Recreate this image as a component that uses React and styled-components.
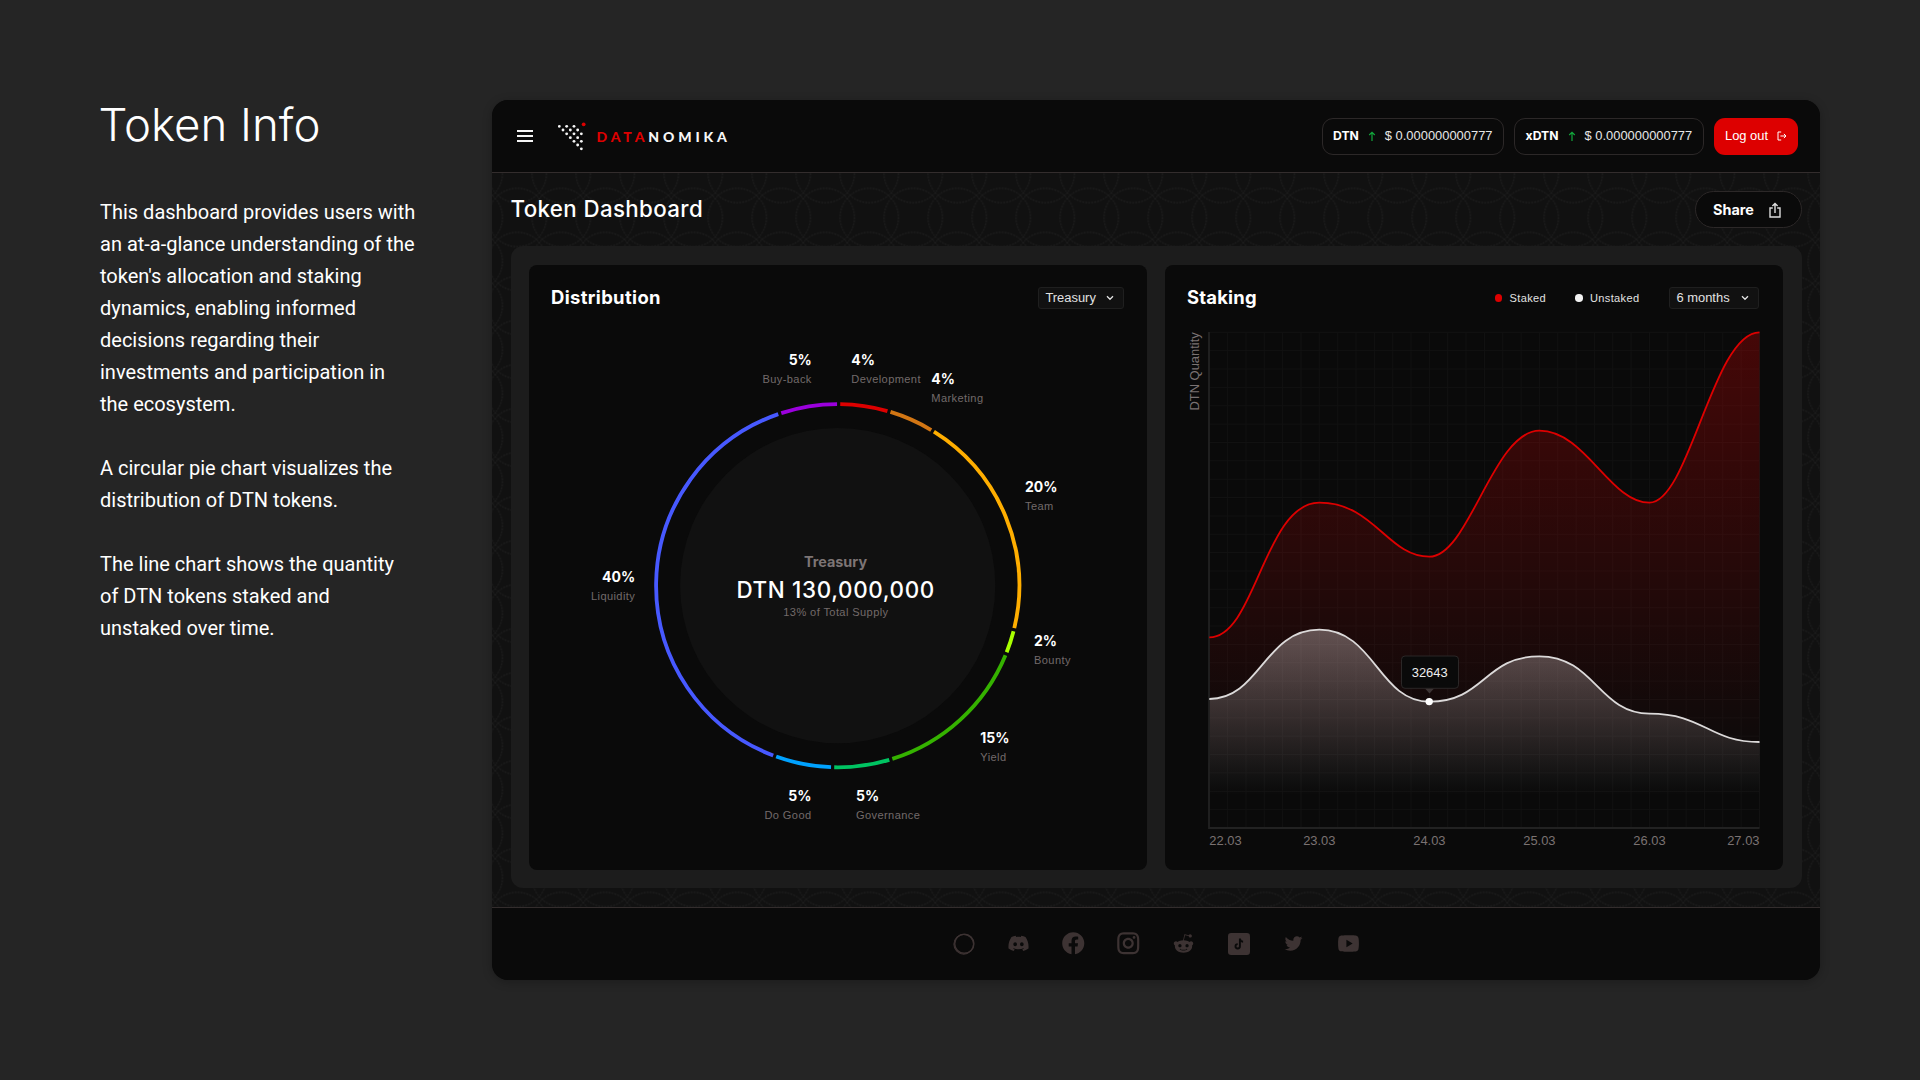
import React from "react";
import styled, { createGlobalStyle } from "styled-components";
import {
  RiFacebookCircleFill,
  RiInstagramLine,
  RiTwitterFill,
  RiYoutubeFill,
  RiDiscordFill,
} from "react-icons/ri";
import { FaRedditAlien } from "react-icons/fa";

const display = `Inter, "Liberation Sans", sans-serif`;
const text = `"Liberation Sans", Arial, sans-serif`;

const GlobalStyle = createGlobalStyle`
  *, *::before, *::after { box-sizing: border-box; }
  body { margin: 0; background: #252525; }
`;

const Page = styled.div`
  display: flex;
  width: 1920px;
  height: 1080px;
  padding: 100px;
  overflow: hidden;
  background: #252525;
  color: #fff;
`;

const Intro = styled.aside`
  flex: none;
  width: 392px;
`;

const IntroTitle = styled.h1`
  margin: 0 0 47px -1.5px;
  font: 300 45.6px/49px ${display};
`;

const IntroText = styled.p`
  margin: 0 0 32px;
  font: 400 20px/32px Roboto, sans-serif;
  letter-spacing: 0;
  white-space: pre-line;
`;

const Window = styled.div`
  display: flex;
  flex-direction: column;
  flex: none;
  width: 1328px;
  height: 880px;
  border-radius: 16px;
  overflow: hidden;
  background: #111;
  box-shadow: 0 2px 10px rgba(0, 0, 0, 0.25);
`;

const Header = styled.header`
  display: flex;
  align-items: center;
  height: 73px;
  padding: 0 22px 0 24.7px;
  border-bottom: 1px solid #332d2d;
  background: #0a0a0a;
`;

const Burger = styled.div`
  display: flex;
  flex-direction: column;
  gap: 3.2px;
  width: 16.6px;
  margin-right: 24.7px;
`;

const BurgerLine = styled.span`
  height: 1.7px;
  background: #f5f5f5;
`;

const Wordmark = styled.div`
  margin: 1px auto 0 10.5px;
  color: #f7f7f7;
  font: 900 14px/20px Lato, sans-serif;
  letter-spacing: 3.85px;
`;

const WordmarkAccent = styled.span`
  color: #dd0000;
`;

const Actions = styled.div`
  display: flex;
  gap: 10.5px;
`;

const Price = styled.div`
  display: flex;
  align-items: center;
  height: 37px;
  padding: 0 10.3px;
  border: 1px solid #2c2828;
  border-radius: 11px;
  color: #e6e6e6;
  font: 400 12.91px/16px ${text};
`;

const Symbol = styled.b`
  color: #fff;
  font: 700 12.2px/16px ${display};
`;

const LogoutButton = styled.button`
  display: flex;
  align-items: center;
  justify-content: space-between;
  width: 84px;
  height: 37px;
  padding: 0 11px;
  border: 0;
  border-radius: 11px;
  background: #dd0000;
  color: #fff;
  font: 400 12.91px/16px ${text};
`;

const Main = styled.main`
  position: relative;
  display: flex;
  flex-direction: column;
  gap: 18px;
  height: 734px;
  padding: 18px 18.5px 19px;
  background: #111;
`;

const Pattern = styled.svg`
  position: absolute;
  inset: 0;
  width: 100%;
  height: 100%;
`;

const TitleRow = styled.div`
  position: relative;
  display: flex;
  align-items: center;
  justify-content: space-between;
  height: 37px;
`;

const PageTitle = styled.h2`
  margin: -2px 0 0;
  font: 500 22.3px/30px ${display};
  letter-spacing: 0.37px;
`;

const ShareButton = styled.button`
  display: flex;
  align-items: center;
  justify-content: space-between;
  width: 107px;
  height: 37px;
  padding: 0 19.5px 0 17.5px;
  border: 1px solid #2c2828;
  border-radius: 19px;
  background: #0a0a0a;
  color: #fff;
  font: 700 14.4px/18px ${display};
`;

const Panel = styled.section`
  position: relative;
  display: flex;
  flex: 1;
  gap: 18px;
  padding: 19px 18.5px 18px;
  border-radius: 12px;
  background: #1c1c1c;
`;

const Card = styled.article`
  flex: 1;
  border-radius: 8px;
  overflow: hidden;
  background: #0a0a0a;
`;

const CardHeader = styled.div`
  display: flex;
  align-items: center;
  height: 44px;
  padding: 22px ${(p) => p.$right}px 0 22px;
`;

const CardTitle = styled.h3`
  margin: -3px auto 0 0;
  font: 700 18.44px/22px ${display};
  letter-spacing: ${(p) => p.$tracking || 0}px;
`;

const Select = styled.div`
  display: flex;
  align-items: center;
  justify-content: space-between;
  width: ${(p) => p.$width}px;
  height: 22px;
  padding: 0 9px 0 6.5px;
  border: 1px solid #1f1f1f;
  border-radius: 3px;
  background: #111;
  color: #e2e2e2;
  font: 400 12.91px/16px ${text};
`;

const LegendItem = styled.div`
  display: flex;
  align-items: center;
  gap: 7.4px;
  margin-right: ${(p) => p.$gap}px;
  color: #e2e2e2;
  font: 400 11.07px/14px ${text};
  letter-spacing: 0.35px;
`;

const LegendDot = styled.span`
  width: 7.5px;
  height: 7.5px;
  border-radius: 50%;
  background: ${(p) => p.$color};
`;

const Chart = styled.svg`
  display: block;
  width: 618px;
  height: 561px;
`;

const Percent = styled.text`
  fill: #fff;
  font: 700 14px ${display};
  text-anchor: ${(p) => p.$anchor};
`;

const Caption = styled.text`
  fill: #736a6a;
  font: 400 11.07px ${text};
  letter-spacing: 0.4px;
  text-anchor: ${(p) => p.$anchor};
`;

const CenterName = styled.text`
  fill: #7d7575;
  font: 700 14.4px ${display};
  text-anchor: middle;
`;

const CenterValue = styled.text`
  fill: #fff;
  font: 500 22.4px ${display};
  letter-spacing: 0.65px;
  text-anchor: middle;
`;

const AxisText = styled.text`
  fill: #7a7272;
  font: 400 12.91px ${text};
  text-anchor: ${(p) => p.$anchor || "middle"};
`;

const TooltipText = styled.text`
  fill: #eee;
  font: 400 12.91px ${text};
  text-anchor: middle;
`;

const Footer = styled.footer`
  display: flex;
  align-items: center;
  justify-content: center;
  gap: 28px;
  height: 73px;
  padding-bottom: 1px;
  border-top: 1px solid #332d2d;
  background: #0a0a0a;
`;

const Social = styled.a`
  display: grid;
  place-items: center;
  width: 27px;
  height: 27px;
  color: #3d3333;
`;

const logoDots = [
  [178, 49], [200, 49], [222, 49], [189, 60], [211, 60], [233, 60],
  [200, 71.5], [222, 71.5], [244, 71.5], [211, 83], [233, 83],
  [222, 94], [244, 94], [233, 105], [244, 116.5],
];

function LogoMark() {
  return (
    <svg width="28" height="30" viewBox="174 33 84 90">
      {logoDots.map(([x, y]) => (
        <circle key={`${x}-${y}`} cx={x} cy={y} r="4.3" fill="#f5f5f5" />
      ))}
      <circle cx="251" cy="43" r="5.6" fill="#dd0000" />
    </svg>
  );
}

const UpArrow = styled.svg`
  width: 8px;
  height: 11px;
  margin: 0 9px;
`;

function PriceTag({ symbol }) {
  return (
    <Price>
      <Symbol>{symbol}</Symbol>
      <UpArrow viewBox="0 0 8 11">
        <path d="M4 10V1.5M1.2 4L4 1.3L6.8 4" fill="none" stroke="#12a83c" strokeWidth="1.2" />
      </UpArrow>
      $ 0.000000000777
    </Price>
  );
}

function Chevron() {
  return (
    <svg width="8" height="6" viewBox="0 0 8 6">
      <path d="M1 1.2L4 4.3L7 1.2" fill="none" stroke="#e2e2e2" strokeWidth="1.3" />
    </svg>
  );
}

const slices = [
  { from: 0.3, to: 16.4, color: "#dd0000" },
  { from: 16.4, to: 31.5, color: "#d27614" },
  { from: 31.5, to: 104, color: "#ffae00" },
  { from: 104, to: 112, color: "#a8ff00" },
  { from: 112, to: 163, color: "#35b200" },
  { from: 163, to: 181.6, color: "#00c462" },
  { from: 181.6, to: 200.3, color: "#00a2ff" },
  { from: 200.3, to: 341.4, color: "#4759ff" },
  { from: 341.4, to: 360.3, color: "#9b00dd" },
];

const sliceLabels = [
  { x: 811.8, y: 364.6, anchor: "end", value: "5%", name: "Buy-back" },
  { x: 851.3, y: 364.5, anchor: "start", value: "4%", name: "Development" },
  { x: 931.3, y: 384.3, anchor: "start", value: "4%", name: "Marketing" },
  { x: 1025, y: 491.6, anchor: "start", value: "20%", name: "Team" },
  { x: 1034, y: 645.6, anchor: "start", value: "2%", name: "Bounty" },
  { x: 980.3, y: 742.6, anchor: "start", value: "15%", name: "Yield" },
  { x: 856, y: 800.6, anchor: "start", value: "5%", name: "Governance" },
  { x: 811.5, y: 800.7, anchor: "end", value: "5%", name: "Do Good" },
  { x: 635.2, y: 582.2, anchor: "end", value: "40%", name: "Liquidity" },
];

const ring = { cx: 837.7, cy: 585.7, r: 181.6 };

function arc(from, to) {
  const pad = 0.5;
  const point = (deg) => {
    const a = (deg * Math.PI) / 180;
    return `${ring.cx + ring.r * Math.sin(a)} ${ring.cy - ring.r * Math.cos(a)}`;
  };
  const large = to - from > 180 ? 1 : 0;
  return `M${point(from + pad)}A${ring.r} ${ring.r} 0 ${large} 1 ${point(to - pad)}`;
}

function DistributionChart() {
  return (
    <Chart viewBox="529 309 618 561">
      <circle cx="837.7" cy="585.6" r="157.6" fill="#111" />
      {slices.map((s) => (
        <path key={s.from} d={arc(s.from, s.to)} fill="none" stroke={s.color} strokeWidth="3.8" />
      ))}
      {sliceLabels.map((l) => (
        <g key={l.name}>
          <Percent x={l.x} y={l.y} $anchor={l.anchor}>{l.value}</Percent>
          <Caption x={l.x} y={l.y + 18} $anchor={l.anchor}>{l.name}</Caption>
        </g>
      ))}
      <CenterName x="835.5" y="566.7">Treasury</CenterName>
      <CenterValue x="835.7" y="597.5">DTN 130,000,000</CenterValue>
      <Caption x="835.9" y="616.2" $anchor="middle">13% of Total Supply</Caption>
    </Chart>
  );
}

const plot = { left: 1209.3, right: 1759.5, top: 332.3, bottom: 828 };
const staked = {
  values: [637.3, 502.7, 556.7, 430.7, 502.7, 332.3],
  ease: [[0.42, 0.5], [0.5, 0.38], [0.36, 0.42], [0.42, 0.36], [0.36, 0.42]],
};
const unstaked = {
  values: [699, 629.7, 701.7, 656.3, 713.7, 742],
  ease: [[0.46, 0.5], [0.5, 0.46], [0.5, 0.5], [0.5, 0.46], [0.5, 0.46]],
};
const dates = ["22.03", "23.03", "24.03", "25.03", "26.03", "27.03"];
const stepX = (plot.right - plot.left) / 5;
const xAt = (i) => plot.left + stepX * i;

function curve({ values, ease }) {
  return values.reduce((d, y, i) => {
    if (i === 0) return `M${xAt(0)} ${y}`;
    const [a, b] = ease[i - 1];
    return `${d}C${xAt(i - 1) + stepX * a} ${values[i - 1]} ${xAt(i) - stepX * b} ${y} ${xAt(i)} ${y}`;
  }, "");
}

const area = (series) => `${curve(series)}V${plot.bottom}H${plot.left}Z`;

function gridPath() {
  let d = "";
  const gx = (plot.right - plot.left) / 30;
  const gy = (plot.bottom - plot.top) / 27;
  for (let i = 1; i <= 30; i += 1) d += `M${plot.left + gx * i} ${plot.top}V${plot.bottom}`;
  for (let i = 0; i < 27; i += 1) d += `M${plot.left} ${plot.top + gy * i}H${plot.right}`;
  return d;
}

function StakingChart() {
  return (
    <Chart viewBox="1165 309 618 561">
      <defs>
        <linearGradient id="stakedFill" gradientUnits="userSpaceOnUse" x1="0" y1="332" x2="0" y2="775">
          <stop offset="0" stopColor="#dd0000" stopOpacity="0.28" />
          <stop offset="1" stopColor="#dd0000" stopOpacity="0" />
        </linearGradient>
        <linearGradient id="unstakedFill" gradientUnits="userSpaceOnUse" x1="0" y1="630" x2="0" y2="795">
          <stop offset="0" stopColor="#f0e4e4" stopOpacity="0.33" />
          <stop offset="1" stopColor="#f0e4e4" stopOpacity="0" />
        </linearGradient>
      </defs>
      <path d={gridPath()} fill="none" stroke="#121212" strokeWidth="1" />
      <path d={area(staked)} fill="url(#stakedFill)" />
      <path d={area(unstaked)} fill="url(#unstakedFill)" />
      <path d="M1209 332V828H1759.5" fill="none" stroke="#222" strokeWidth="1.8" />
      <path d={curve(staked)} fill="none" stroke="#dd0000" strokeWidth="1.8" />
      <path d={curve(unstaked)} fill="none" stroke="#dcdada" strokeWidth="1.8" />

      <AxisText transform="translate(1198.6 410.5) rotate(-90)" $anchor="start">DTN Quantity</AxisText>
      {dates.map((d, i) => (
        <AxisText key={d} x={xAt(i)} y="845.3" $anchor={i === 0 ? "start" : i === 5 ? "end" : "middle"}>
          {d}
        </AxisText>
      ))}

      <path d="M1425 688.5H1434L1429.5 693.5Z" fill="#3d3535" />
      <rect x="1401.5" y="656" width="57" height="32.3" rx="3.5" fill="#0a0a0a" stroke="#2b2727" />
      <TooltipText x="1429.7" y="676.5">32643</TooltipText>
      <circle cx="1429.2" cy="701.6" r="3.7" fill="#fff" />
    </Chart>
  );
}

function TiktokIcon() {
  return (
    <svg width="22" height="22" viewBox="0 0 22 22">
      <rect width="22" height="22" rx="3.2" fill="currentColor" />
      <path
        d="M11.9 5.4V13.3A2.2 2.2 0 1 1 9.7 11.1M11.9 5.6C12.1 7.5 13.3 8.6 15.1 8.7"
        fill="none"
        stroke="#0a0a0a"
        strokeWidth="1.9"
      />
    </svg>
  );
}

function RingIcon() {
  return (
    <svg width="22" height="22" viewBox="0 0 22 22" fill="none" stroke="currentColor">
      <circle cx="10.7" cy="11.3" r="9.8" strokeWidth="1.1" />
      <circle cx="11.3" cy="10.7" r="9.6" strokeWidth="1.4" />
    </svg>
  );
}

export default function App() {
  return (
    <>
      <GlobalStyle />
      <Page>
        <Intro>
          <IntroTitle>Token Info</IntroTitle>
          <IntroText>
            {"This dashboard provides users with\nan at-a-glance understanding of the\ntoken's allocation and staking\ndynamics, enabling informed\ndecisions regarding their\ninvestments and participation in\nthe ecosystem."}
          </IntroText>
          <IntroText>{"A circular pie chart visualizes the\ndistribution of DTN tokens."}</IntroText>
          <IntroText>
            {"The line chart shows the quantity\nof DTN tokens staked and\nunstaked over time."}
          </IntroText>
        </Intro>

        <Window>
          <Header>
            <Burger>
              <BurgerLine />
              <BurgerLine />
              <BurgerLine />
            </Burger>
            <LogoMark />
            <Wordmark>
              <WordmarkAccent>DATA</WordmarkAccent>NOMIKA
            </Wordmark>
            <Actions>
              <PriceTag symbol="DTN" />
              <PriceTag symbol="xDTN" />
              <LogoutButton>
                Log out
                <svg width="10" height="10" viewBox="0 0 10 10" fill="none" stroke="#fff">
                  <path d="M4.2 1H1V9H4.2M3.4 5H8.8M6.9 2.9L9 5L6.9 7.1" strokeWidth="1" />
                </svg>
              </LogoutButton>
            </Actions>
          </Header>

          <Main>
            <Pattern>
              <defs>
                <pattern id="rings" x="3.3" y="22.5" width="44" height="44" patternUnits="userSpaceOnUse">
                  <g fill="none" stroke="#262626" strokeWidth="0.9" strokeDasharray="1.6 1.4">
                    <circle cx="22" cy="22" r="29.2" />
                    <circle cx="-22" cy="22" r="29.2" />
                    <circle cx="66" cy="22" r="29.2" />
                    <circle cx="22" cy="-22" r="29.2" />
                    <circle cx="22" cy="66" r="29.2" />
                  </g>
                </pattern>
              </defs>
              <rect width="100%" height="100%" fill="url(#rings)" />
            </Pattern>

            <TitleRow>
              <PageTitle>Token Dashboard</PageTitle>
              <ShareButton>
                Share
                <svg width="12" height="16" viewBox="0 0 12 16" fill="none" stroke="#ddd" strokeWidth="1.4">
                  <path d="M3.8 6H1V15H11V6H8.2M6 11V1.6M3.4 4L6 1.4L8.6 4" />
                </svg>
              </ShareButton>
            </TitleRow>

            <Panel>
              <Card>
                <CardHeader $right={22.6}>
                  <CardTitle $tracking={0.35}>Distribution</CardTitle>
                  <Select $width={86.5}>
                    Treasury
                    <Chevron />
                  </Select>
                </CardHeader>
                <DistributionChart />
              </Card>
              <Card>
                <CardHeader $right={24}>
                  <CardTitle $tracking={0.2}>Staking</CardTitle>
                  <LegendItem $gap={29}>
                    <LegendDot $color="#dd0000" />
                    Staked
                  </LegendItem>
                  <LegendItem $gap={29.5}>
                    <LegendDot $color="#f2f2f2" />
                    Unstaked
                  </LegendItem>
                  <Select $width={90}>
                    6 months
                    <Chevron />
                  </Select>
                </CardHeader>
                <StakingChart />
              </Card>
            </Panel>
          </Main>

          <Footer>
            <Social><RingIcon /></Social>
            <Social><RiDiscordFill size={23} /></Social>
            <Social><RiFacebookCircleFill size={26.5} /></Social>
            <Social><RiInstagramLine size={26.5} /></Social>
            <Social><FaRedditAlien size={21} /></Social>
            <Social><TiktokIcon /></Social>
            <Social><RiTwitterFill size={21} /></Social>
            <Social><RiYoutubeFill size={25} /></Social>
          </Footer>
        </Window>
      </Page>
    </>
  );
}
